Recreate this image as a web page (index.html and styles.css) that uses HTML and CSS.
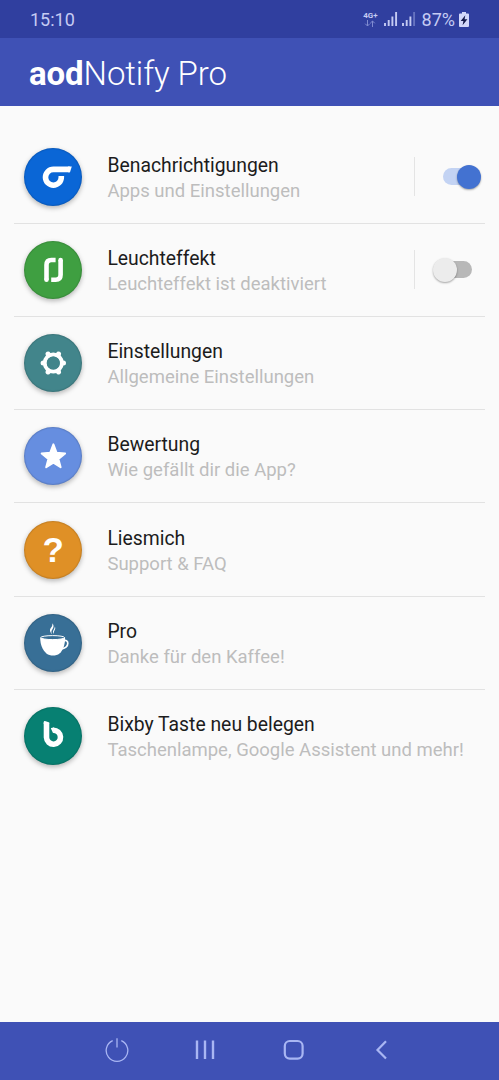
FILE: index.html
```html
<!DOCTYPE html>
<html lang="de">
<head>
    <meta charset="UTF-8">
    <meta name="viewport" content="width=device-width, initial-scale=1.0">
    <title>aodNotify Pro</title>
    <link rel="stylesheet" href="styles.css">
</head>
<body>
    <div class="statusbar">
        <span class="clock">15:10</span>
        <div class="status">
            <div class="network">
                <span>4G+</span>
                <svg width="12" height="7" viewBox="0 0 12 7"><path d="M3.500 0v6M1.200 3.700l2.300 2.300 2.300-2.300M8.500 7V1M6.200 3.300l2.300-2.300 2.300 2.300"/></svg>
            </div>
            <svg class="signal" width="14" height="14" viewBox="0 0 14 14"><path d="M1 11v3M4.700 8v6M8.400 4.500V14M12.100 0v14"/></svg>
            <svg class="signal second" width="14" height="14" viewBox="0 0 14 14"><path d="M1 11v3M4.700 8v6M8.400 4.500V14"/><path class="weak" d="M12.100 0v14"/></svg>
            <span class="percent">87%</span>
            <svg class="battery" width="10" height="15" viewBox="0 0 10 15"><path fill="#d3d8fa" d="M3 0h4v1.500h2q1 0 1 1V14q0 1-1 1H1q-1 0-1-1V2.500q0-1 1-1h2z"/><path fill="#151a4a" d="M6.300 3.300L1.700 9h2.700l-.8 4.200L8.400 7.300H5.600z"/></svg>
        </div>
    </div>
    <header class="header">
        <h1><b>aod</b>Notify Pro</h1>
    </header>
    <main class="list">
        <div class="item">
            <svg class="icon blue" viewBox="0 0 58 58"><path class="line" stroke-width="5.600" d="M45.800 21.400H29.400a7.900 7.900 0 1 0 7.900 7.900V28"/><path fill="#fff" d="M44 18.600h3.800L46 24.200H44z"/></svg>
            <div class="text"><h2>Benachrichtigungen</h2><p>Apps und Einstellungen</p></div>
            <div class="toggle on"><span class="track"><span class="thumb"></span></span></div>
        </div>
        <div class="item">
            <svg class="icon green" viewBox="0 0 58 58"><path class="line" stroke-width="4.600" d="M31.600 19H27.400q-4.900 0-4.900 5v14.800"/><path class="line" stroke-width="4.600" d="M27.200 38.700h4.500q4.900 0 4.900-5V19"/><circle cx="22.500" cy="38.800" r="2.300" fill="#fff"/><circle cx="36.600" cy="19" r="2.300" fill="#fff"/></svg>
            <div class="text"><h2>Leuchteffekt</h2><p>Leuchteffekt ist deaktiviert</p></div>
            <div class="toggle"><span class="track"><span class="thumb"></span></span></div>
        </div>
        <div class="item">
            <svg class="icon teal" viewBox="0 0 58 58"><circle class="line" cx="29.300" cy="29" r="8.500" stroke-width="4"/><path class="line" stroke-width="5" stroke-linecap="round" d="M38.300 29h1.200M33.800 36.800l.7 1.200M24.800 36.800l-.7 1.200M20.300 29h-1.200M24.800 21.200l-.7-1.200M33.800 21.200l.7-1.200"/><circle class="hole" cx="29.300" cy="29" r="6.600"/></svg>
            <div class="text"><h2>Einstellungen</h2><p>Allgemeine Einstellungen</p></div>
        </div>
        <div class="item">
            <svg class="icon sky" viewBox="0 0 58 58"><path fill="#fff" stroke="#fff" stroke-width="2" stroke-linejoin="round" d="M29.400 17.400l3.200 8.400 8.500.6-6.700 5.500 2.200 8.300-7.200-4.500-7.200 4.500 2.200-8.300-6.700-5.500 8.500-.6z"/></svg>
            <div class="text"><h2>Bewertung</h2><p>Wie gefällt dir die App?</p></div>
        </div>
        <div class="item">
            <svg class="icon orange" viewBox="0 0 58 58"><text x="29.300" y="41.200" text-anchor="middle">?</text></svg>
            <div class="text"><h2>Liesmich</h2><p>Support &amp; FAQ</p></div>
        </div>
        <div class="item">
            <svg class="icon steel" viewBox="0 0 58 58">
                <path fill="#fff" d="M16.200 23.500c0 7 2.200 12.500 6.300 16 3.500 2.800 9.500 2.800 13 0 3.800-3.300 5.600-9 5.600-16z"/>
                <ellipse cx="28.650" cy="23.600" rx="11.900" ry="2" fill="#386f96" stroke="#fff"/>
                <path class="line" stroke-width="1.700" d="M39.800 27c1.800-1.200 4-.3 4 2.200 0 3.200-2.900 5.600-6.200 5.600"/>
                <path fill="#fff" d="M28.300 20.500c-3.600-3.600-2.300-5.200-.8-7.400.8-1.200 1.100-2.400.7-3.900 1.700 1.900 1.700 3.300.6 5.300-1.100 2.100-2.200 3.200-.5 6zm2.600-8c.7 1.600.3 2.800-.4 4-.8 1.300-.9 2.300-.6 3.600-1.400-1.600-1.200-2.800-.2-4.400.7-1.200 1.100-2 1.200-3.200z"/>
            </svg>
            <div class="text"><h2>Pro</h2><p>Danke für den Kaffee!</p></div>
        </div>
        <div class="item">
            <svg class="icon bixby" viewBox="0 0 58 58"><path class="line" stroke-width="5.600" stroke-linejoin="round" d="M22.500 15.500v15a7 7 0 1 0 6.600-7.300"/><path fill="#fff" d="M19.700 15.500q0-2 2-1.300l2.300.9q1.300.4 1.300 1.800h-5.600zM26.800 21.300q1-.9 3-.9v5.600h-.8z"/></svg>
            <div class="text"><h2>Bixby Taste neu belegen</h2><p>Taschenlampe, Google Assistent und mehr!</p></div>
        </div>
    </main>
    <nav class="navbar">
        <svg viewBox="0 0 24 24"><path stroke-width="1.300" d="M7.700 2.600a10.800 10.800 0 1 0 8.600 0M12 .2v9.300"/></svg>
        <svg viewBox="0 0 24 24"><path stroke-width="2.400" d="M4 2.500v18.500M12 2.500v18.500M20 2.500v18.500"/></svg>
        <svg viewBox="0 0 24 24"><rect x="2.800" y="3" width="17.800" height="17.600" rx="5" stroke-width="2.200"/></svg>
        <svg viewBox="0 0 24 24"><path stroke-width="2.200" d="M16 3.200L7.500 12l8.500 8.500"/></svg>
    </nav>
</body>
</html>
```
FILE: styles.css
```css
* {
    box-sizing: border-box;
}
body {
    margin: 0;
    height: 1080px;
    display: flex;
    flex-direction: column;
    font-family: Roboto, sans-serif;
    background-color: #fafafa;
    overflow: hidden;
}
h1, h2, p {
    margin: 0;
    font-weight: 400;
    white-space: nowrap;
}
.statusbar {
    height: 38px;
    padding: 0 30px;
    display: flex;
    align-items: center;
    justify-content: space-between;
    background-color: #303f9f;
    color: #c5cbf3;
    font-size: 18px;
}
.status {
    display: flex;
    align-items: center;
}
.network {
    display: flex;
    flex-direction: column;
    align-items: center;
    margin-right: 6px;
    font-size: 8px;
    line-height: 8px;
    font-weight: 700;
}
.network svg {
    fill: none;
    stroke: #7f8bd0;
}
.signal {
    fill: none;
    stroke: #c5cbf3;
    stroke-width: 1.9;
}
.second {
    margin-left: 4px;
}
.signal .weak {
    stroke: #6673c0;
}
.percent {
    margin: 0 4px 0 6px;
}
.header {
    height: 68px;
    padding: 2px 0 0 29px;
    display: flex;
    align-items: center;
    background-color: #3f51b5;
    color: #fff;
}
.header h1 {
    font-size: 33px;
    font-weight: 300;
    letter-spacing: -0.1px;
}
.header b {
    font-weight: 700;
}
.list {
    flex: 1;
    padding: 24.7px 14px 0;
}
.item {
    height: 93.2px;
    padding-left: 10px;
    display: flex;
    align-items: center;
    border-bottom: 1px solid #e2e2e2;
}
.item:last-child {
    border-bottom: none;
}
.icon {
    width: 58px;
    height: 58px;
    flex: none;
    border-radius: 50%;
    box-shadow: 0 2px 5px rgba(0, 0, 0, 0.28), inset 0 0 1px 1px rgba(0, 0, 0, 0.12);
}
.icon text {
    font: 700 35px "Liberation Sans", sans-serif;
    fill: #fff;
}
.line {
    fill: none;
    stroke: #fff;
}
.hole {
    fill: #42858b;
}
.blue { background-color: #0a66d6; }
.green { background-color: #3f9f41; }
.teal { background-color: #42858b; }
.sky { background-color: #668ee0; }
.orange { background-color: #df9026; }
.steel { background-color: #386f96; }
.bixby { background-color: #078072; }
.text {
    flex: 1;
    padding: 3px 0 0 25.4px;
}
.text h2 {
    font-size: 19.35px;
    line-height: 26px;
    color: #1c1c1c;
}
.text p {
    font-size: 18.5px;
    line-height: 25px;
    color: #bdbdbd;
}
.toggle {
    width: 71.5px;
    height: 39px;
    display: flex;
    align-items: center;
    justify-content: center;
    border-left: 1px solid #e4e4e4;
}
.track {
    width: 29px;
    height: 17px;
    border-radius: 9px;
    display: flex;
    align-items: center;
    background-color: #b8b8b8;
    margin-left: 16px;
}
.thumb {
    width: 24px;
    height: 24px;
    flex: none;
    margin-left: -10px;
    border-radius: 50%;
    background-color: #ececec;
    box-shadow: 0 1px 2px rgba(0, 0, 0, 0.35);
}
.on .track {
    background-color: #c3d3f3;
}
.on .thumb {
    margin-left: 14px;
    background-color: #4372d1;
}
.navbar {
    height: 58px;
    padding: 0 73px 2px 73px;
    display: flex;
    align-items: center;
    justify-content: space-around;
    background-color: #3f51b5;
}
.navbar svg {
    width: 24px;
    height: 24px;
    fill: none;
    stroke: #a9b6f3;
}
```
